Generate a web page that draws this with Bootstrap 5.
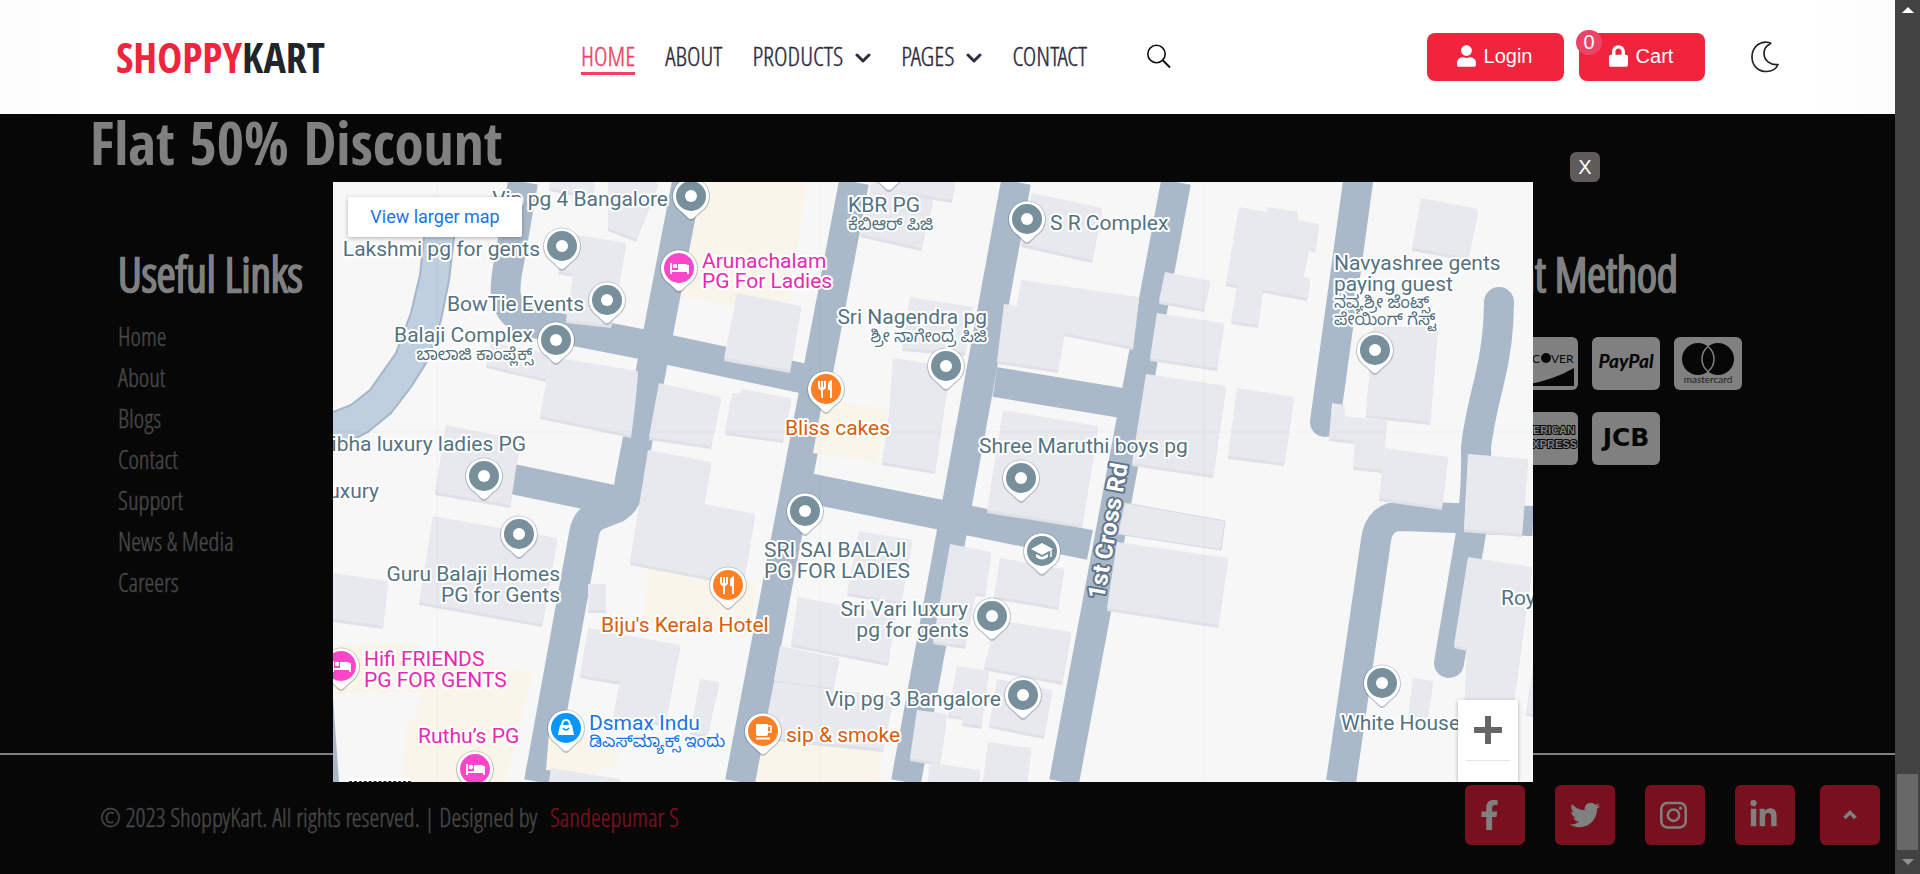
<!DOCTYPE html>
<html lang="en">
<head>
<meta charset="utf-8">
<meta name="viewport" content="width=device-width, initial-scale=1">
<title>ShoppyKart</title>
<link href="https://cdn.jsdelivr.net/npm/bootstrap@5.3.0/dist/css/bootstrap.min.css" rel="stylesheet">
<script src="https://cdn.jsdelivr.net/npm/bootstrap@5.3.0/dist/js/bootstrap.bundle.min.js"></script>
<style>
  :root { --brand: #f1243d; --accent: #ee4266; --ink: #2f2e41; --dim: #808080; --dim-link: #484848; --dim-brand: #78111d; }
  body { background: #070707; font-family: "Open Sans Condensed Light", "Roboto Condensed", sans-serif; }
  .logo, .promo { font-family: "Open Sans Condensed", "Roboto Condensed", sans-serif; }
  .page { min-height: 100vh; }
  .site-header { height: 114px; padding: 0 116px; z-index: 20; background: linear-gradient(90deg, #fcfcfc 0, #fff 85px, #fff calc(100% - 85px), #fcfcfc 100%); }
  .logo { font-size: 42px; line-height: 48px; font-weight: 700; color: #212529; }
  .logo span { color: var(--brand); }
  .menu { gap: 30px; }
  .menu a, .foot-links, .copy-bar { -webkit-text-stroke: .4px; }
  .menu a { color: var(--ink); font-size: 26px; line-height: 32px; text-decoration: none; border-bottom: 3px solid transparent; }
  .menu a.current { color: var(--accent); border-color: var(--accent); }
  .menu a svg { margin-left: 12px; }
  .search-btn { margin-left: 30px; }
  .pill { height: 48px; border-radius: 8px; background: var(--brand); color: #fff; font: 20px/24px "Liberation Sans", sans-serif; padding: 0 2px 2px 0; }
  .count { left: -3px; top: -3px; width: 26px; height: 25px; border-radius: 13px; background: var(--accent); line-height: 24px; }
  .theme-btn { margin-left: 46px; }
  .promo { padding: 0 90px; font-size: 59px; line-height: 56px; font-weight: 700; color: var(--dim); }
  .foot-cols { padding: 76px 151px 0 118px; }
  .foot-title { font-size: 48px; line-height: 56px; font-weight: 700; color: var(--dim); margin-bottom: 18px; -webkit-text-stroke: 1px; }
  .foot-links { gap: 9px; }
  .foot-links a { display: block; font-size: 25px; line-height: 32px; color: var(--dim-link); text-decoration: none; }
  .pay { width: 316px; }
  .pay .foot-title { margin-left: -16px; }
  .pay-list { column-gap: 14px; row-gap: 22px; padding-top: 35px; }
  .copy-bar { border-top: 2px solid var(--dim); padding: 30px 15px 29px 100px; font-size: 25px; line-height: 38px; color: var(--dim-link); }
  .copy-bar p { padding-top: 4px; }
  .copy-bar p a { color: var(--dim-brand); text-decoration: none; margin-left: 8px; }
  .social { gap: 30px; }
  .sq { width: 60px; height: 60px; border-radius: 6px; background: var(--dim-brand); padding: 0 15px; color: var(--dim); }
  .top-btn { margin-left: -5px; }
  .map-layer { left: 333px; top: 152px; z-index: 10; width: 1200px; max-width: 100%; }
  .close-btn { left: 1237px; width: 30px; height: 30px; border-radius: 6px; background: #5f5b5b; color: #fff; font: 20px/26px "Liberation Sans", sans-serif; }
  .map-frame { margin-top: 30px; }
  .map-frame text { font-family: Roboto, "Noto Sans Kannada", sans-serif; font-size: 21px; fill: #557280; stroke: #fff; stroke-width: 4px; stroke-linejoin: round; paint-order: stroke; }
  .map-frame text.kn { font-size: 17px; }
  .map-frame .stay text { fill: #e52bb0; }
  .map-frame .food text { fill: #d6600d; }
  .map-frame .shop text { fill: #1a73e8; }
  .map-frame .road-name { font-weight: 700; fill: #fff; stroke: #62748c; font-size: 24px; }
  .larger { left: 15px; top: 15px; width: 174px; height: 40px; border-radius: 2px; background: #fff; color: #1a73e8; font: 18px/40px Roboto, sans-serif; box-shadow: 0 1px 4px rgba(0,0,0,.3); text-decoration: none; }
  .zoomer { right: 15px; bottom: 0; width: 60px; height: 82px; background: #fff; box-shadow: 0 1px 4px rgba(0,0,0,.3); padding: 16px 8px 0; }
  .zoomer hr { margin: 16px 0 0; color: #999; }
  .keys { left: 16px; bottom: 0; width: 62px; height: 4px; border-radius: 3px 3px 0 0; background: #fff; border-bottom: 1px dashed #333; }
  .scroller { width: 25px; background: #424242; padding: 7px 0 9px; }
  .thumb { width: 21px; height: 76px; background: #686868; margin-bottom: 9px; }
</style>
</head>
<body>
<div class="page d-flex">
  <div class="flex-grow-1 d-flex flex-column position-relative overflow-hidden">
    <header class="site-header d-flex align-items-center justify-content-between">
      <a class="logo text-decoration-none" href="#"><span>SHOPPY</span>KART</a>
      <nav class="menu d-flex align-items-center">
        <a class="current" href="#">HOME</a>
        <a href="#">ABOUT</a>
        <a href="#">PRODUCTS<svg width="16" height="11" viewBox="0 0 16 11" fill="none" stroke="currentColor" stroke-width="3" stroke-linecap="round" stroke-linejoin="round"><path d="M2 2l6 6 6-6"/></svg></a>
        <a href="#">PAGES<svg width="16" height="11" viewBox="0 0 16 11" fill="none" stroke="currentColor" stroke-width="3" stroke-linecap="round" stroke-linejoin="round"><path d="M2 2l6 6 6-6"/></svg></a>
        <a href="#">CONTACT</a>
        <button class="search-btn btn p-0 border-0 d-flex" aria-label="Search"><svg width="24" height="26" viewBox="0 0 24 26" fill="none" stroke="#111" stroke-width="1.6"><circle cx="9.500" cy="10" r="8.700"/><path d="M16 16.500l7 7" stroke-width="2"/></svg></button>
      </nav>
      <div class="d-flex align-items-center">
        <button class="pill btn border-0 d-flex align-items-center justify-content-center gap-2" style="width:137px"><svg width="19" height="22" viewBox="0 0 448 512" fill="currentColor"><path d="M224 256c70.700 0 128-57.300 128-128S294.700 0 224 0 96 57.300 96 128s57.300 128 128 128zm89.600 32h-16.700c-22.200 10.200-46.900 16-72.900 16s-50.600-5.800-72.900-16h-16.700C60.200 288 0 348.200 0 422.400V464c0 26.500 21.500 48 48 48h352c26.500 0 48-21.500 48-48v-41.600c0-74.200-60.200-134.400-134.400-134.400z"/></svg>Login</button>
        <button class="pill btn border-0 d-flex align-items-center justify-content-center gap-2 position-relative" style="width:126px;margin-left:15px"><span class="count position-absolute">0</span><svg width="19" height="22" viewBox="0 0 448 512" fill="currentColor"><path d="M400 224h-24v-72C376 68.200 307.800 0 224 0S72 68.200 72 152v72H48c-26.500 0-48 21.500-48 48v192c0 26.500 21.500 48 48 48h352c26.500 0 48-21.500 48-48V272c0-26.500-21.500-48-48-48zm-104 0H152v-72c0-39.700 32.300-72 72-72s72 32.300 72 72v72z"/></svg>Cart</button>
        <button class="theme-btn btn p-0 border-0 d-flex" aria-label="Dark mode"><svg width="28" height="32" viewBox="0 0 28 32" fill="none" stroke="#212529" stroke-width="1.700" stroke-linejoin="round"><path d="M18 1.500C8.500-.5 1 6.500 1 16s7 14.500 14.500 14.500c5.500 0 10-3 11.500-7-7 1-14-3.500-14-11.500 0-4 2-7 6-9 1-.5 1-1.300-1-1.500z"/></svg></button>
      </div>
    </header>

    <main class="flex-grow-1">
      <h1 class="promo mb-0">Flat 50% Discount</h1>
      <footer class="foot-cols d-flex justify-content-between">
        <section>
          <h2 class="foot-title">Useful Links</h2>
          <ul class="foot-links list-unstyled d-flex flex-column mb-0">
            <li><a href="#">Home</a></li><li><a href="#">About</a></li><li><a href="#">Blogs</a></li><li><a href="#">Contact</a></li><li><a href="#">Support</a></li><li><a href="#">News &amp; Media</a></li><li><a href="#">Careers</a></li>
          </ul>
        </section>
        <section class="pay">
          <h2 class="foot-title mb-0 text-nowrap">Payment Method</h2>
          <div class="pay-list d-flex flex-wrap">
            <svg width="68" height="53"><rect width="68" height="53" rx="6" fill="#808080"/></svg>
            <svg width="68" height="53"><rect width="68" height="53" rx="6" fill="#808080"/><g fill="#070707" font-family="Lato" font-size="12"><text x="3" y="26">DISC</text><circle cx="36" cy="21" r="5"/><text x="41" y="26">VER</text><path d="M10 49q32-5 54-18v18z"/></g></svg>
            <svg width="68" height="53"><rect width="68" height="53" rx="6" fill="#808080"/><text x="34" y="31" text-anchor="middle" font-family="Lato" font-weight="900" font-style="italic" font-size="19" fill="#070707">PayPal</text></svg>
            <svg width="68" height="53"><rect width="68" height="53" rx="6" fill="#808080"/><g fill="#070707"><circle cx="24" cy="22" r="16"/><circle cx="44" cy="22" r="16"/></g><path d="M34 9.500a16 16 0 0 1 0 25a16 16 0 0 1 0-25z" fill="#070707" stroke="#808080" stroke-width="1.500"/><text x="34" y="46" text-anchor="middle" font-family="Lato" font-size="10" fill="#222">mastercard</text></svg>
            <svg width="68" height="53"><rect width="68" height="53" rx="6" fill="#808080"/></svg>
            <svg width="68" height="53"><rect width="68" height="53" rx="6" fill="#808080"/><g font-family="Liberation Sans" font-weight="700" font-size="11" fill="#808080" stroke="#070707" stroke-width="2" paint-order="stroke" text-anchor="end"><text x="65" y="22">AMERICAN</text><text x="67" y="36">EXPRESS</text></g></svg>
            <svg width="68" height="53"><rect width="68" height="53" rx="6" fill="#808080"/><text x="34" y="34" text-anchor="middle" font-family="DejaVu Sans" font-weight="700" font-size="25" fill="#070707">JCB</text></svg>
          </div>
        </section>
      </footer>
    </main>

    <div class="copy-bar d-flex align-items-center justify-content-between">
      <p class="mb-0">© 2023 ShoppyKart. All rights reserved. | Designed by <a href="#">Sandeepumar S</a></p>
      <div class="social d-flex">
        <a class="sq d-flex align-items-center" href="#" aria-label="Facebook"><svg width="19" height="30" viewBox="0 0 320 512" fill="currentColor"><path d="M279.140 288l14.220-92.660h-88.910v-60.130c0-25.350 12.420-50.060 52.240-50.060h40.420V6.260S260.430 0 225.360 0c-73.220 0-121.080 44.380-121.080 124.720v70.620H22.890V288h81.390v224h100.170V288z"/></svg></a>
        <a class="sq d-flex align-items-center" href="#" aria-label="Twitter"><svg width="30" height="30" viewBox="0 0 512 512" fill="currentColor"><path d="M459.370 151.716c.325 4.548.325 9.097.325 13.645 0 138.720-105.583 298.558-298.558 298.558-59.452 0-114.680-17.219-161.137-47.106 8.447.974 16.568 1.299 25.340 1.299 49.055 0 94.213-16.568 130.274-44.832-46.132-.975-84.792-31.188-98.112-72.772 6.498.974 12.995 1.624 19.818 1.624 9.421 0 18.843-1.300 27.614-3.573-48.081-9.747-84.143-51.980-84.143-102.985v-1.299c13.969 7.797 30.214 12.670 47.431 13.319-28.264-18.843-46.781-51.005-46.781-87.391 0-19.492 5.197-37.360 14.294-52.954 51.655 63.675 129.300 105.258 216.365 109.807-1.624-7.797-2.599-15.918-2.599-24.040 0-57.828 46.782-104.934 104.934-104.934 30.213 0 57.502 12.670 76.670 33.137 23.715-4.548 46.456-13.320 66.599-25.340-7.798 24.366-24.366 44.833-46.132 57.827 21.117-2.273 41.584-8.122 60.426-16.243-14.292 20.791-32.161 39.308-52.628 54.253z"/></svg></a>
        <a class="sq d-flex align-items-center" href="#" aria-label="Instagram"><svg width="27" height="30" viewBox="0 0 27 30" fill="none" stroke="currentColor" stroke-width="2.500"><rect x="1.300" y="3" width="24.400" height="24.400" rx="6"/><circle cx="13.500" cy="15.200" r="5.700"/><circle cx="20.500" cy="8.200" r="1.600" fill="currentColor" stroke="none"/></svg></a>
        <a class="sq d-flex align-items-center" href="#" aria-label="LinkedIn"><svg width="27" height="30" viewBox="0 0 448 512" fill="currentColor"><path d="M100.280 448H7.400V148.900h92.880zM53.790 108.100C24.090 108.100 0 83.500 0 53.800a53.790 53.790 0 0 1 107.580 0c0 29.700-24.100 54.300-53.790 54.300zM447.900 448h-92.680V302.400c0-34.700-.7-79.200-48.290-79.200-48.290 0-55.690 37.700-55.690 76.700V448h-92.780V148.900h89.080v40.800h1.300c12.400-23.500 42.690-48.300 87.880-48.300 94 0 111.280 61.900 111.280 142.300V448z"/></svg></a>
        <a class="sq top-btn d-flex align-items-center justify-content-center" href="#" aria-label="Back to top"><svg width="14" height="10" viewBox="0 0 14 10" fill="none" stroke="currentColor" stroke-width="3.400"><path d="M1.500 8L7 2.500 12.500 8"/></svg></a>
      </div>
    </div>

    <!-- Location map shown over the dimmed page -->
    <div class="map-layer position-absolute">
      <button class="close-btn btn p-0 border-0 position-absolute">X</button>
      <div class="map-frame position-relative overflow-hidden">
        <svg class="d-block w-100" viewBox="0 0 1200 600">
          <defs>
            <g id="pin"><path d="M0 25C-3 25-6 20-11 16A19 19 0 1 1 11 16C6 20 3 25 0 25z" fill="#54677a" opacity=".35"/><path d="M0 23C-3 23-6 18-11 14.500A18 18 0 1 1 11 14.500C6 18 3 23 0 23z" fill="#fff"/></g>
            <g id="dot"><use href="#pin"/><circle r="15" fill="#78909c"/><circle r="6" fill="#fff"/></g>
            <g id="bed"><use href="#pin"/><circle r="15" fill="#fa46cb"/><path d="M-8-5v11M-8 3H9M9 6V-3" stroke="#fff" stroke-width="1.800" fill="none"/><path d="M-1-4H6q3 0 3 3v3H-1z" fill="#fff"/><circle cx="-4" cy="-2" r="2.300" fill="#fff"/></g>
            <g id="fork"><use href="#pin"/><circle r="15" fill="#ff7f22"/><path d="M-7-8v5q0 3 3 3t3-3v-5M-4-8V9" stroke="#fff" stroke-width="2" fill="none"/><path d="M6 9H4V1H2v-5q0-4 4-5z" fill="#fff"/></g>
            <path id="blocks" d="M217 0l-1 6 43 8 3-14zM275 0v46l28 11L325 0zM245 53l48 8-8 44-7 38-45-5 7-46-15-3zM158 160l-5 23 60 14 4-25zM218 175l87 14-3 33-4 31-91-19zM326 201l62 14-10 49-62-9zM404 111l64 13-11 64-66-12zM399 211h10v-4l49 9-8 42-58-8zM315 268l63 12-7 42 51 10-12 70-113-22zM113 243l74 15-10 65-75-13zM100 334l124 22-15 86-123-22zM0 391l55 8-5 45-50-7zM255 402h18v26h-18zM255 446l92 17-15 78-52-6 7-35-40-7zM367 497l19 3-12 53-17-2zM218 586l69 11v3h-71zM537 0h85l-3 18-79-13zM538 3l62 15-12 48-61-14zM699 11l70 15-10 52-71-16zM688 98l118 17-6 50-69-14-6 37-61-9 7-57 13 2zM577 115l63 10-8 46-63-5zM560 176l57 9-15 104-53-9 7-48zM670 228l95 16-16 99-95-15zM906 25l28 5v-5l31 5v8l21 4-4 26-6-3-6 30 7 1-3 20-81-15zM904 103l26 2-5 38-27-4zM832 90l45 9-6 28-45-8zM824 131l67 10-7 45-67-10zM813 192l80 12-13 89-81-12zM904 206l57 9-10 66-56-7zM1088 16l57 11-10 49-56-10zM1040 145h65l-8 95-64-7zM999 221l13 2-1 11 43 5-5 49-29-3 2-26-26-3zM1052 266l63 9-6 50-63-9zM1135 272l60 5-6 75-58-5zM1135 375l64 10-21 155-3 60h-47l6-134-13-3zM784 360l111 16-10 67-111-17zM1080 496l20 3-6 39-19-2zM1200 484l-7 47 7 1zM526 349l53 9-11 62-54-9zM465 415l97 18-7 48-97-19zM447 464l59 12-6 30-59-8zM441 500l119 15-10 52-120-12zM617 362l41 8-6 42-10-1-10 53-32-5zM667 376l64 11-6 38-64-11zM664 438l74 12-9 50-78-15zM624 484l32 5-8 55-19-3v-6l-14-2zM664 497l55 11-8 46-55-11zM584 528l30 4-7 49-30-5zM655 560l43 6-4 34h-44zM597 581l50 7-1 12h-51z"/>
          </defs>
          <rect width="1200" height="600" fill="#f7f7f7"/>
          <path d="M93 24l-2 32-4 37-9 38-15 40-26 37-19 15-20 8v36l25-11 12-6 23-19 20-26 17-27 13-40 8-40 5-42 1-32z" fill="#bfcfe0" stroke="#a5b6c9" stroke-width="2"/>
          <g fill="#f9f5ea"><path d="M356 0h118l-18 122-56 2-62-12zM505 218l50 10-11 53-64-10 10-56zM317 384l107 16-9 55-106-15zM0 462l85-2v15l115 15-28 110H68l6-63h8l6-27-88 2zM425 555l125 13-5 32H420z"/></g>
          <g fill="none" stroke="#a9b9ca" stroke-width="30">
            <path d="M190 0L177 75Q170 108 174 118 178 135 200 141L313 163 487 200M354 0L297 298Q296 318 283 326L265 333Q253 338 251 352L206 600M165 294L285 319M521 0L407 600M683 0L573 600M470 305L757 363M662 200L795 222M843 0L731 600M1200 339L1070 334Q1046 334 1043 358L1008 600"/>
            <path d="M1025 0L992 240M1166 120Q1166 160 1156 200T1143 265Q1144 310 1138 351L1116 481" stroke-linecap="round"/>
          </g>
          <path d="M0 515l6 85H0z" fill="#a9b9ca"/>
          <path d="M216 550l71 10-4 26-15-1-3 7-52-4z" fill="#f9f5ea"/>
          <use href="#blocks" y="3" fill="#dfe1e7"/><use href="#blocks" fill="#e8e9ee"/>
          <path d="M792 321l100 18-4 29-103-16z" fill="#e8e9ec" stroke="#d3d8e2"/>
          <path d="M480 271l10-56 65 13-11 53z" fill="#f9f5ea"/>
          <path d="M104 0v600M487 0v600M871 0v600M0 250h1200" stroke="#000" stroke-opacity=".03"/>
          <g>
            <use href="#dot" x="358" y="14"/><use href="#dot" x="229" y="64"/><use href="#dot" x="274" y="118"/><use href="#dot" x="223" y="158"/><use href="#dot" x="151" y="294"/><use href="#dot" x="186" y="352"/><use href="#dot" x="694" y="37"/><use href="#dot" x="613" y="184"/><use href="#dot" x="688" y="296"/><use href="#dot" x="472" y="329"/><use href="#dot" x="659" y="434"/><use href="#dot" x="690" y="513"/><use href="#dot" x="1042" y="168"/><use href="#dot" x="1049" y="501"/><use href="#dot" x="556" y="-15"/>
            <use href="#bed" x="346" y="86"/><use href="#bed" x="8" y="484"/><use href="#bed" x="142" y="587"/>
            <use href="#fork" x="493" y="207"/><use href="#fork" x="395" y="403"/>
            <g transform="translate(430 549)"><use href="#pin"/><circle r="15" fill="#ff7f22"/><path d="M-7-7H5V3Q5 5 3 5H-5Q-7 5-7 3zM-7 6.500H7v2H-7z" fill="#fff"/><path d="M5-5h3v6H5" fill="none" stroke="#fff" stroke-width="1.600"/></g>
            <g transform="translate(233 546)"><use href="#pin"/><circle r="15" fill="#0a95ff"/><path d="M-6-3H6L8 7H-8z" fill="#fff"/><path d="M-4-2q0-6 4-6t4 6" fill="none" stroke="#fff" stroke-width="2"/><path d="M-3 0q3 4 6 0" fill="none" stroke="#0a95ff" stroke-width="1.500"/></g>
            <g transform="translate(709 369)"><use href="#pin"/><circle r="15" fill="#78909c"/><path d="M0-8L11-2 0 4-11-2zM-6 3l6 3 6-3v3Q0 11-6 6z" fill="#fff"/><path d="M9-2v8" stroke="#fff" stroke-width="1.500"/></g>
          </g>
          <text class="road-name" transform="translate(771 418) rotate(-80)">1st Cross Rd</text>
          <g text-anchor="end">
            <text x="335" y="24">Vip pg 4 Bangalore</text><text x="207" y="74">Lakshmi pg for gents</text><text x="251" y="129">BowTie Events</text><text x="200" y="160">Balaji Complex</text><text class="kn" x="200" y="178">ಬಾಲಾಜಿ ಕಾಂಪ್ಲೆಕ್ಸ್</text><text x="193" y="269">Vibha luxury ladies PG</text><text x="46" y="316">luxury</text><text x="654" y="142">Sri Nagendra pg</text><text class="kn" x="654" y="160">ಶ್ರೀ ನಾಗೇಂದ್ರ ಪಿಜಿ</text><text x="227" y="399">Guru Balaji Homes</text><text x="227" y="420">PG for Gents</text><text x="635" y="434">Sri Vari luxury</text><text x="636" y="455">pg for gents</text><text x="668" y="524">Vip pg 3 Bangalore</text>
          </g>
          <g>
            <text x="515" y="30">KBR PG</text><text class="kn" x="515" y="48">ಕೆಬಿಆರ್ ಪಿಜಿ</text><text x="717" y="48">S R Complex</text><text x="646" y="271">Shree Maruthi boys pg</text><text x="1001" y="88">Navyashree gents</text><text x="1001" y="109">paying guest</text><text class="kn" x="1001" y="126">ನವ್ಯಶ್ರೀ ಜೆಂಟ್ಸ್</text><text class="kn" x="1001" y="143">ಪೇಯಿಂಗ್ ಗೆಸ್ಟ್</text><text x="431" y="375">SRI SAI BALAJI</text><text x="431" y="396">PG FOR LADIES</text><text x="1008" y="548">White House</text><text x="1168" y="423">Royal</text>
          </g>
          <g class="stay"><text x="369" y="86">Arunachalam</text><text x="369" y="106">PG For Ladies</text><text x="31" y="484">Hifi FRIENDS</text><text x="31" y="505">PG FOR GENTS</text><text x="85" y="561">Ruthu’s PG</text></g>
          <g class="food"><text x="452" y="253">Bliss cakes</text><text x="268" y="450">Biju's Kerala Hotel</text><text x="453" y="560">sip &amp; smoke</text></g>
          <g class="shop"><text x="256" y="548">Dsmax Indu</text><text class="kn" x="256" y="565">ಡಿಎಸ್‌ಮ್ಯಾಕ್ಸ್ ಇಂದು</text></g>
        </svg>
        <a class="larger position-absolute text-center" href="#">View larger map</a>
        <div class="zoomer position-absolute"><button class="btn p-0 border-0 d-flex mx-auto" aria-label="Zoom in"><svg width="28" height="28" viewBox="0 0 28 28"><path d="M11 0h6v11h11v6H17v11h-6V17H0v-6h11z" fill="#666"/></svg></button><hr></div>
        <div class="keys position-absolute"></div>
      </div>
    </div>
  </div>

  <div class="scroller d-flex flex-column align-items-center" aria-hidden="true">
    <svg width="12" height="6"><path d="M6 0l6 6H0z" fill="#fff"/></svg>
    <div class="thumb mt-auto"></div>
    <svg width="12" height="6"><path d="M0 0h12L6 6z" fill="#909090"/></svg>
  </div>
</div>
</body>
</html>
